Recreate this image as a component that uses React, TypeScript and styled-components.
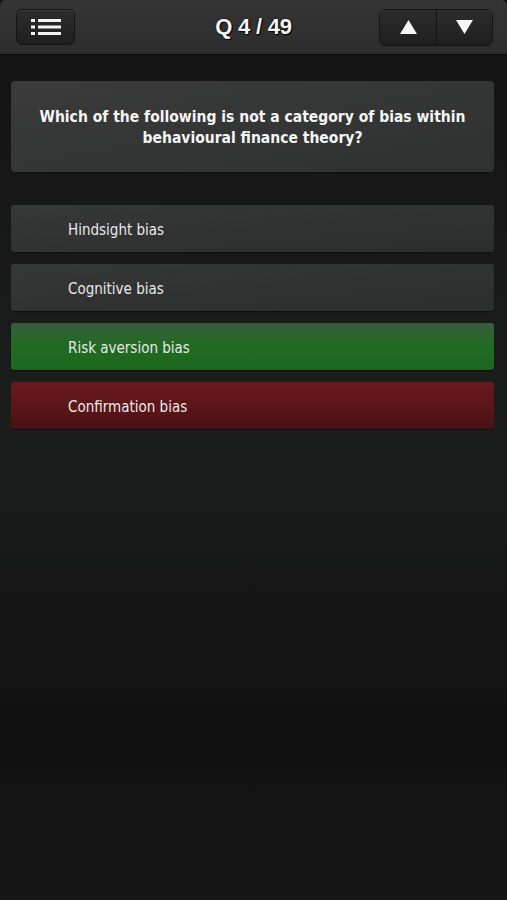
import React from "react";
import styled, { createGlobalStyle } from "styled-components";

const GlobalStyle = createGlobalStyle`
  html, body {
    margin: 0;
    padding: 0;
    background: #111;
  }
  #root {
    min-height: 900px;
  }
`;

const Screen = styled.div`
  width: 507px;
  height: 900px;
  display: flex;
  flex-direction: column;
  background: linear-gradient(
    180deg,
    #141414 0%,
    #171717 20%,
    #1c1d1d 48%,
    #151515 70%,
    #101010 82%,
    #171717 100%
  );
  font-family: "DejaVu Sans Condensed", "DejaVu Sans", sans-serif;
  overflow: hidden;
`;

const TopBar = styled.div`
  height: 54px;
  flex-shrink: 0;
  display: flex;
  align-items: center;
  justify-content: space-between;
  padding: 0 14px 0 16px;
  background: linear-gradient(180deg, #343434 0%, #2d2d2d 100%);
  border-radius: 6px 6px 0 0;
  border-bottom: 1px solid #0c0c0c;
  position: relative;
`;

const BarButton = styled.button`
  height: 36px;
  width: 59px;
  display: flex;
  align-items: center;
  justify-content: center;
  padding: 0;
  border: 1px solid #141414;
  border-radius: 6px;
  background: linear-gradient(180deg, #2c2c2c 0%, #1f1f1f 100%);
  box-shadow: inset 0 1px 0 rgba(255, 255, 255, 0.08);
  cursor: pointer;
`;

const Title = styled.div`
  position: absolute;
  left: 0;
  right: 0;
  text-align: center;
  pointer-events: none;
  font-family: "Liberation Sans", Arial, sans-serif;
  font-weight: bold;
  font-size: 22px;
  color: #f4f4f4;
  text-shadow: 1px 1px 1px #000, 0 0 2px #000;
  letter-spacing: -0.2px;
`;

const ArrowGroup = styled.div`
  display: flex;
  border: 1px solid #141414;
  border-radius: 6px;
  overflow: hidden;
  box-shadow: inset 0 1px 0 rgba(255, 255, 255, 0.08);
`;

const ArrowButton = styled.button<{ $first?: boolean }>`
  height: 35px;
  width: 56px;
  display: flex;
  align-items: center;
  justify-content: center;
  padding: 0;
  border: none;
  border-left: ${(p) => (p.$first ? "none" : "1px solid #141414")};
  background: linear-gradient(180deg, #2c2c2c 0%, #1f1f1f 100%);
  cursor: pointer;
`;

const Content = styled.div`
  display: flex;
  flex-direction: column;
  padding: 26px 13px 0 11px;
`;

const QuestionCard = styled.div`
  height: 91px;
  box-sizing: border-box;
  display: flex;
  align-items: center;
  justify-content: center;
  padding: 2px 20px 0;
  border-radius: 4px;
  background: linear-gradient(170deg, #3b3b3b 0%, #333434 60%, #2f3131 100%);
  box-shadow: 0 1px 1px rgba(0, 0, 0, 0.5);
  color: #f6f6f6;
  font-weight: bold;
  font-size: 15.5px;
  line-height: 21px;
  text-align: center;
`;

const Answers = styled.div`
  margin-top: 33px;
  display: flex;
  flex-direction: column;
  gap: 12px;
`;

const toneBg: Record<string, string> = {
  plain: "linear-gradient(175deg, #363737 0%, #303232 55%, #2c2e2e 100%)",
  right: "linear-gradient(180deg, #3b5b3b 0%, #226a24 45%, #1c6820 100%)",
  wrong: "linear-gradient(180deg, #671a1d 0%, #5c1518 55%, #491113 100%)",
};

const Answer = styled.div<{ $tone: string }>`
  height: 47px;
  display: flex;
  align-items: center;
  padding-left: 57px;
  padding-top: 2px;
  box-sizing: border-box;
  border-radius: 3px;
  background: ${(p) => toneBg[p.$tone]};
  box-shadow: 0 1px 1px rgba(0, 0, 0, 0.5);
  color: #e8e8e8;
  font-size: 15px;
`;

const ListIcon = () => (
  <svg width="30" height="18" viewBox="0 0 30 18">
    {[1, 7.5, 14].map((y) => (
      <g key={y} fill="#f2f2f2">
        <rect x="0" y={y} width="4" height="3" />
        <rect x="7" y={y} width="23" height="3" />
      </g>
    ))}
  </svg>
);

const Triangle = ({ up }: { up: boolean }) => (
  <svg width="17" height="14" viewBox="0 0 17 14">
    <polygon
      points={up ? "8.5,0 17,14 0,14" : "0,0 17,0 8.5,14"}
      fill="#f6f6f6"
    />
  </svg>
);

const answers = [
  { text: "Hindsight bias", tone: "plain" },
  { text: "Cognitive bias", tone: "plain" },
  { text: "Risk aversion bias", tone: "right" },
  { text: "Confirmation bias", tone: "wrong" },
];

const App = () => (
  <Screen>
    <GlobalStyle />
    <TopBar>
      <BarButton>
        <ListIcon />
      </BarButton>
      <Title>Q 4 / 49</Title>
      <ArrowGroup>
        <ArrowButton $first>
          <Triangle up />
        </ArrowButton>
        <ArrowButton>
          <Triangle up={false} />
        </ArrowButton>
      </ArrowGroup>
    </TopBar>
    <Content>
      <QuestionCard>
        Which of the following is not a category of bias within behavioural
        finance theory?
      </QuestionCard>
      <Answers>
        {answers.map((a) => (
          <Answer key={a.text} $tone={a.tone}>
            {a.text}
          </Answer>
        ))}
      </Answers>
    </Content>
  </Screen>
);

export default App;
